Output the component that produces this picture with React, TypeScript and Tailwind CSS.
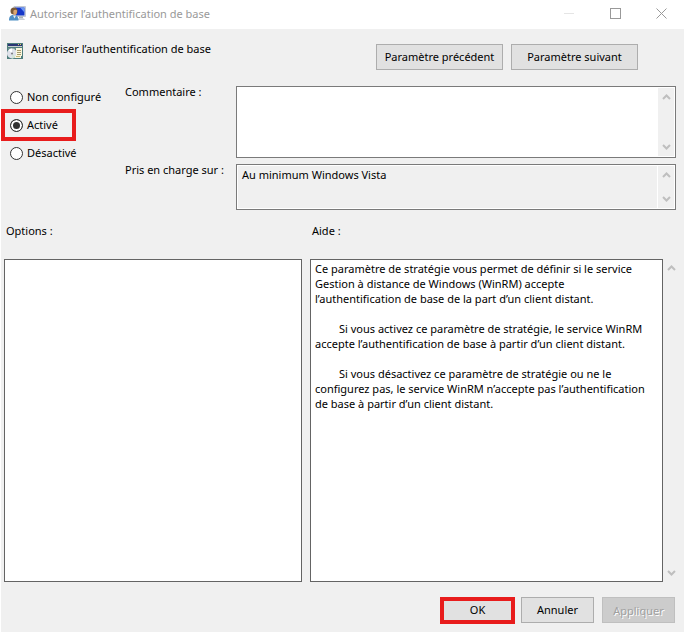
import type { ReactNode } from "react"

const states = ["Non configuré", "Activé", "Désactivé"]

function UserMonitorIcon() {
  return (
    <svg width="17" height="16" viewBox="0 0 17 16" className="shrink-0" aria-hidden="true">
      <path d="M5 .5h11.5v10H5z" fill="#dde2ea" stroke="#c3c9d2" />
      <path d="M6 1.500h9.500v8H6z" fill="#1638c8" />
      <path d="M11 1.500h4.500v5z" fill="#6c98f4" />
      <path d="M10 10.500h4v2h-4z" fill="#a8b0ba" />
      <path d="M9 12.500h6l1 1.500H9z" fill="#c9cfd6" />
      <path d="M0 14.500c0-4 1.500-5.500 4.500-5.500s5 1.500 5 5.500z" fill="#4f8fc4" />
      <path d="M4 9.500h3L5.500 12.500z" fill="#e8eef4" />
      <circle cx="5" cy="5" r="3.500" fill="#7a5a38" />
      <path d="M4.500 4.500c1-1 3-1 3.500 0 0 3-.5 4.500-2 4.500s-2-2-1.500-4.500z" fill="#dba670" />
    </svg>
  )
}

function PolicyIcon() {
  return (
    <svg width="16" height="16" viewBox="0 0 16 16" className="shrink-0" shapeRendering="crispEdges" aria-hidden="true">
      <path d="M0 0h16v16H0z" fill="#4f7d7c" />
      <path d="M1 1h14v2H1z" fill="#2b3674" />
      <path d="M11 1h1v1h-1zM13 1h1v1h-1z" fill="#e0d060" />
      <path d="M1 3h14v1H1z" fill="#c4cccc" />
      <path d="M1 5h14v1H1z" fill="#6f9090" />
      <g shapeRendering="auto">
        <circle cx="5" cy="10.500" r="5" fill="#dfe2ea" />
        <path d="M5 10.500L1.500 7A5 5 0 0 1 5 5.500z" fill="#fff" />
        <path d="M5 10.500l3.500 3.500A5 5 0 0 1 5 15.500z" fill="#d4e6d8" />
        <circle cx="5" cy="10.500" r="1" fill="#77777f" />
      </g>
      <path d="M9 5h6v8H9zM8 13h6v2H8z" fill="#fbf6dc" />
      <path d="M10 7h4v1h-4zM10 9h4v1h-4zM10 11h4v1h-4z" fill="#a4986c" />
      <path d="M9 13h4v1H9z" fill="#c9b978" />
    </svg>
  )
}

function Arrow({ down = false }: { down?: boolean }) {
  return (
    <svg width="9" height="6" viewBox="0 0 9 6" className={down ? "rotate-180" : ""} fill="none" aria-hidden="true">
      <path d="M1 5l3.500-3.500L8 5" stroke="#bfbfbf" strokeWidth="2" />
    </svg>
  )
}

function Scrollbar() {
  return (
    <div className="flex w-4 shrink-0 flex-col items-center justify-between bg-[#f0f0f0] py-1.5">
      <Arrow />
      <Arrow down />
    </div>
  )
}

function DialogButton({ children, className = "" }: { children: ReactNode; className?: string }) {
  return (
    <button type="button" className={`h-[26px] border border-[#adadad] bg-[#e1e1e1] pb-0.5 ${className}`}>
      {children}
    </button>
  )
}

export default function App() {
  return (
    <div className="flex min-h-screen flex-col border-l border-white bg-[#f0f0f0] font-['Noto_Sans','Segoe_UI',sans-serif] text-[11px] leading-[15px] text-black">
      <header className="flex h-[29px] items-center bg-white pb-0.5 pl-2 text-[#999999]">
        <UserMonitorIcon />
        <h1 className="flex-1 pl-1">Autoriser l’authentification de base</h1>
        <button type="button" aria-label="Réduire" className="flex h-full w-[46px] items-center justify-center">
          <span className="h-px w-2.5 bg-[#e5e5e5]" />
        </button>
        <button type="button" aria-label="Agrandir" className="flex h-full w-[46px] items-center justify-center">
          <span className="size-[11px] border border-[#999999]" />
        </button>
        <button type="button" aria-label="Fermer" className="flex h-full w-[46px] items-center justify-center">
          <svg width="11" height="11" viewBox="0 0 11 11" stroke="#999999" aria-hidden="true">
            <path d="M.5.500l10 10M10.500.500l-10 10" />
          </svg>
        </button>
      </header>

      <div className="flex items-start pt-3 pr-[46px] pl-1.5">
        <div className="pt-0.5">
          <PolicyIcon />
        </div>
        <h2 className="flex-1 pl-2">Autoriser l’authentification de base</h2>
        <div className="flex gap-2 pt-[3px]">
          <DialogButton className="w-[127px]">Paramètre précédent</DialogButton>
          <DialogButton className="w-[127px]">Paramètre suivant</DialogButton>
        </div>
      </div>

      <form className="mt-[15px] flex pr-2">
        <fieldset className="flex w-[124px] shrink-0 flex-col items-start gap-1 pl-1">
          {states.map((state) => (
            <label
              key={state}
              className={`flex h-6 min-w-[67px] items-center gap-1 px-[5px] ${state === "Activé" ? "outline-4 outline-[#e81c1c]" : ""}`}
            >
              <input
                type="radio"
                name="state"
                defaultChecked={state === "Activé"}
                className="size-[13px] appearance-none rounded-full border border-[#333333] bg-white checked:bg-[#333333] checked:shadow-[inset_0_0_0_2px_white]"
              />
              <span className="pb-0.5">{state}</span>
            </label>
          ))}
        </fieldset>
        <div className="grid flex-1 grid-cols-[111px_1fr] gap-y-1.5 pt-px">
          <label htmlFor="comment" className="leading-3">
            Commentaire :
          </label>
          <div className="flex h-[72px] border border-[#7a7a7a] bg-white p-px">
            <textarea id="comment" className="min-w-0 flex-1 resize-none px-1 outline-none" />
            <Scrollbar />
          </div>
          <label htmlFor="supported" className="leading-3">
            Pris en charge sur :
          </label>
          <div className="flex h-[46px] gap-px border border-[#7a7a7a] bg-white p-px">
            <textarea
              id="supported"
              readOnly
              defaultValue="Au minimum Windows Vista"
              className="min-w-0 flex-1 resize-none bg-[#f0f0f0] px-1 py-px outline-none"
            />
            <Scrollbar />
          </div>
        </div>
      </form>

      <main className="mt-[13px] flex flex-1 gap-2 pr-[5px] pl-[3px]">
        <section className="flex flex-1 flex-col">
          <h3 className="h-9 pl-0.5">Options :</h3>
          <div className="flex-1 border border-[#646464] bg-white" />
        </section>
        <section className="flex w-[369px] flex-col">
          <h3 className="h-9 pl-0.5">Aide :</h3>
          <div className="flex flex-1">
            <div className="flex-1 space-y-[15px] border border-[#646464] bg-white pt-px pr-3 pl-1">
              <p>
                Ce paramètre de stratégie vous permet de définir si le service Gestion à distance de Windows (WinRM)
                accepte l’authentification de base de la part d’un client distant.
              </p>
              <p className="indent-6">
                Si vous activez ce paramètre de stratégie, le service WinRM accepte l’authentification de base à partir
                d’un client distant.
              </p>
              <p className="indent-6">
                Si vous désactivez ce paramètre de stratégie ou ne le configurez pas, le service WinRM n’accepte pas
                l’authentification de base à partir d’un client distant.
              </p>
            </div>
            <Scrollbar />
          </div>
        </section>
      </main>

      <footer className="flex gap-2 pt-[15px] pr-[9px] pb-2">
        <button
          type="button"
          className="-mr-0.5 ml-auto h-[27px] w-[75px] border-4 border-[#e81c1c] bg-[#e1e1e1] pb-0.5"
        >
          OK
        </button>
        <DialogButton className="w-[73px]">Annuler</DialogButton>
        <button
          type="button"
          disabled
          className="h-[26px] w-[73px] border border-[#bfbfbf] bg-[#cccccc] text-[#a0a0a0] text-shadow-[1px_1px_0_white]"
        >
          Appliquer
        </button>
      </footer>
    </div>
  )
}
